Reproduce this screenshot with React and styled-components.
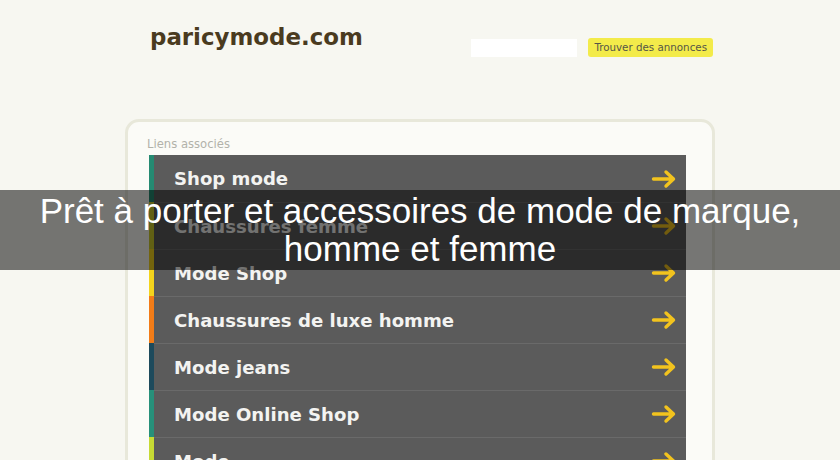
import React from "react";
import styled, { createGlobalStyle } from "styled-components";

const Global = createGlobalStyle`
  html, body { margin: 0; padding: 0; }
  body {
    background: #f7f7f1;
    font-family: "DejaVu Sans", Verdana, sans-serif;
    width: 840px;
    height: 460px;
    overflow: hidden;
  }
`;

const Page = styled.div`
  position: relative;
  width: 840px;
  height: 460px;
  overflow: hidden;
`;

const Container = styled.div`
  width: 590px;
  margin: 0 auto;
  display: flex;
  flex-direction: column;
`;

const Header = styled.header`
  height: 119px;
  display: flex;
  align-items: flex-start;
  justify-content: space-between;
  padding: 24px 2px 0 25px;
  box-sizing: border-box;
`;

const Logo = styled.div`
  font-weight: bold;
  font-size: 22.9px;
  color: #4a3b1f;
`;

const Search = styled.form`
  display: flex;
  gap: 11px;
  margin-top: 14px;
`;

const Input = styled.div`
  width: 106px;
  height: 18px;
  margin-top: 1px;
  background: #ffffff;
`;

const Button = styled.div`
  height: 19px;
  padding: 0 6px;
  border-radius: 3px;
  background: #f3eb4a;
  color: #555548;
  font-size: 10.3px;
  line-height: 19px;
  white-space: nowrap;
`;

const Box = styled.section`
  border: 3px solid #e8e8da;
  border-radius: 14px;
  background: #fbfbf7;
  padding: 15px 26px 0 21px;
  height: 400px;
`;

const Caption = styled.div`
  font-size: 11.6px;
  color: #b2b2aa;
  height: 18px;
  line-height: 14px;
  margin-left: -2px;
`;

const List = styled.div`
  display: flex;
  flex-direction: column;
`;

const Row = styled.div`
  display: flex;
  height: 47px;
`;

const Bar = styled.div`
  width: 5px;
  flex: none;
  background: ${(p) => p.$color};
`;

const RowBody = styled.div`
  flex: 1;
  display: flex;
  align-items: center;
  justify-content: space-between;
  background: #5b5b5b;
  border-top: ${(p) => (p.$first ? "none" : "1px solid #6a6a6a")};
  padding: 0 9px 0 20px;
  color: #f3f3f1;
  font-weight: bold;
  font-size: 18.1px;
`;

const Overlay = styled.div`
  position: absolute;
  left: 0;
  top: 190px;
  width: 840px;
  height: 80px;
  background: rgba(0, 0, 0, 0.53);
  display: flex;
  align-items: center;
  justify-content: center;
  text-align: center;
  color: #ffffff;
  font-family: "Liberation Sans", Arial, sans-serif;
  font-size: 35px;
  line-height: 38px;
`;

const Arrow = () => (
  <svg width="26" height="20" viewBox="0 0 26 20" fill="none">
    <path
      d="M2.5 10 H22.5 M15 3 L22.5 10 L15 17"
      stroke="#f2c31e"
      strokeWidth="3.4"
      strokeLinecap="round"
      strokeLinejoin="round"
    />
  </svg>
);

const items = [
  { label: "Shop mode", color: "#258a72" },
  { label: "Chaussures femme", color: "#cfcc2c" },
  { label: "Mode Shop", color: "#f4d41c" },
  { label: "Chaussures de luxe homme", color: "#f27c18" },
  { label: "Mode jeans", color: "#1d4a5c" },
  { label: "Mode Online Shop", color: "#27907a" },
  { label: "Mode", color: "#c6da34" },
];

export default function App() {
  return (
    <Page>
      <Global />
      <Container>
        <Header>
          <Logo>paricymode.com</Logo>
          <Search>
            <Input />
            <Button>Trouver des annonces</Button>
          </Search>
        </Header>
        <Box>
          <Caption>Liens associés</Caption>
          <List>
            {items.map((it, i) => (
              <Row key={it.label}>
                <Bar $color={it.color} />
                <RowBody $first={i === 0}>
                  <span>{it.label}</span>
                  <Arrow />
                </RowBody>
              </Row>
            ))}
          </List>
        </Box>
      </Container>
      <Overlay>
        Prêt à porter et accessoires de mode de marque,
        <br />
        homme et femme
      </Overlay>
    </Page>
  );
}
